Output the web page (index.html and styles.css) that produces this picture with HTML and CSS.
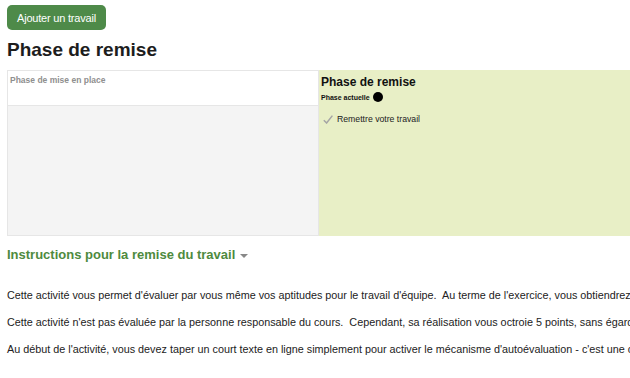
FILE: index.html
```html
<!DOCTYPE html>
<html lang="fr">
<head>
<meta charset="utf-8">
<link rel="stylesheet" href="styles.css">
</head>
<body>
<div class="page">
  <button class="btn">Ajouter un travail</button>
  <h2 class="title">Phase de remise</h2>
  <div class="phases">
    <div class="phase">
      <div class="phase-head">Phase de mise en place</div>
      <div class="phase-body"></div>
    </div>
    <div class="phase current">
      <div class="cur-head">
        <div class="cur-title">Phase de remise</div>
        <div class="cur-sub">Phase actuelle <span class="dot"></span></div>
      </div>
      <div class="task">
        <svg class="check" width="10" height="9" viewBox="0 0 10 9"><path d="M0.8 5.2 L3.6 8 L9.4 0.6" fill="none" stroke="#a5a5a5" stroke-width="1.5"/></svg>
        <span>Remettre votre travail</span>
      </div>
    </div>
  </div>
  <h3 class="instr">Instructions pour la remise du travail <span class="caret"></span></h3>
  <div class="text">
    <p>Cette activité vous permet d'évaluer par vous même vos aptitudes pour le travail d'équipe.&nbsp; Au terme de l'exercice, vous obtiendrez un aperçu de vos forces.</p>
    <p>Cette activité n'est pas évaluée par la personne responsable du cours.&nbsp; Cependant, sa réalisation vous octroie 5 points, sans égard aux résultats.</p>
    <p>Au début de l'activité, vous devez taper un court texte en ligne simplement pour activer le mécanisme d'autoévaluation - c'est une condition.</p>
  </div>
</div>
</body>
</html>
```
FILE: styles.css
```css
html, body {
  margin: 0;
  padding: 0;
  overflow: hidden;
  background: #fff;
}
body {
  font-family: "Liberation Sans", Arial, sans-serif;
  color: #222;
}
.page {
  width: 1000px;
  padding: 5px 7px 0 7px;
}
.btn {
  display: block;
  height: 25px;
  width: 99px;
  padding: 0;
  border: none;
  border-radius: 5px;
  background: #4e8a49;
  color: #fff;
  font-family: "Liberation Sans", Arial, sans-serif;
  font-size: 11px;
  letter-spacing: -0.2px;
}
.title {
  margin: 9px 0 0 0;
  font-size: 19px;
  line-height: 22px;
  font-weight: bold;
  color: #1d1d1d;
}
.phases {
  margin-top: 9px;
  display: flex;
  height: 166px;
}
.phase {
  width: 310px;
  display: flex;
  flex-direction: column;
  border: 1px solid #e6e6e6;
}
.phase-head {
  height: 35px;
  background: #fff;
  border-bottom: 1px solid #e6e6e6;
  box-sizing: border-box;
  padding: 4px 2px;
  font-size: 8.5px;
  font-weight: bold;
  color: #8f8f8f;
}
.phase-body {
  flex: 1;
  background: #f4f4f4;
}
.phase.current {
  width: 320px;
  background: #e8efc6;
  border-color: #e8efc6;
  border-left: none;
}
.cur-head {
  padding: 4px 2px 0 2px;
}
.cur-title {
  font-size: 12px;
  font-weight: bold;
  color: #111;
  line-height: 14px;
}
.cur-sub {
  margin-top: 3px;
  font-size: 7px;
  font-weight: bold;
  color: #111;
  display: flex;
  align-items: center;
  gap: 3px;
}
.dot {
  display: inline-block;
  width: 10px;
  height: 10px;
  border-radius: 50%;
  background: #000;
}
.task {
  margin-top: 12px;
  padding-left: 4px;
  display: flex;
  align-items: center;
  gap: 4px;
  font-size: 8.7px;
  color: #222;
}
.instr {
  margin: 11px 0 0 0;
  font-size: 13px;
  line-height: 16px;
  font-weight: bold;
  color: #4e8a3e;
  display: flex;
  align-items: center;
  gap: 5px;
}
.caret {
  display: inline-block;
  width: 0;
  height: 0;
  border-left: 4px solid transparent;
  border-right: 4px solid transparent;
  border-top: 4px solid #888;
  margin-top: 2px;
}
.text {
  margin-top: 24px;
}
.text p {
  margin: 0 0 10.5px 0;
  font-size: 10.8px;
  line-height: 16.5px;
  color: #222;
  white-space: nowrap;
}
```
